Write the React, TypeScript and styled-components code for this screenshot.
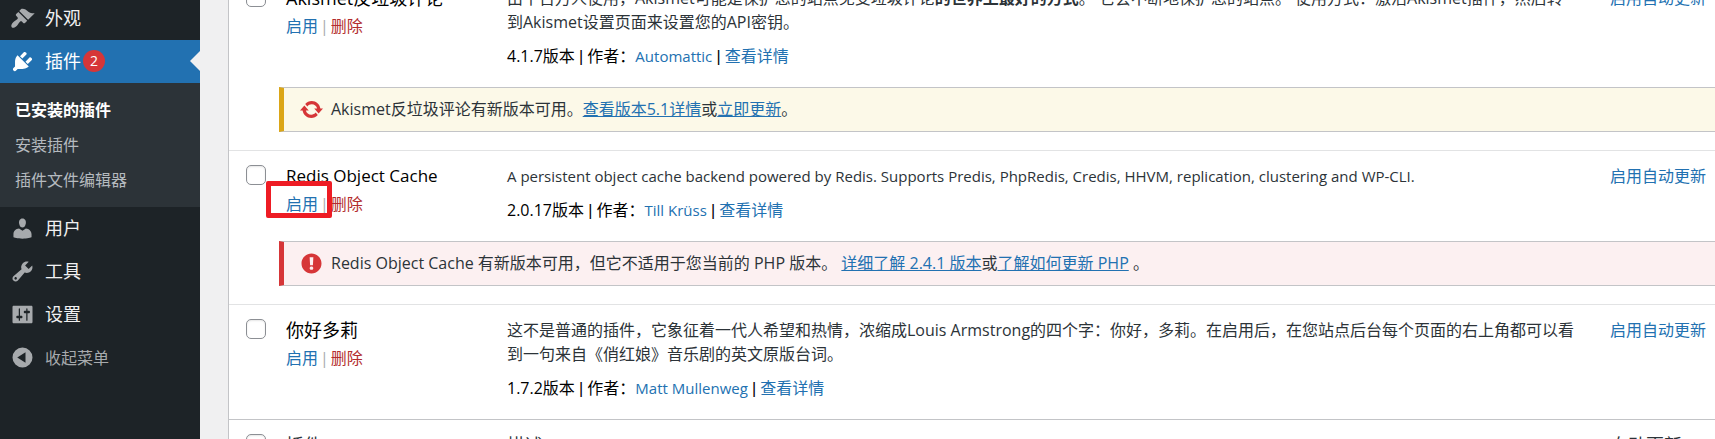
import React from 'react';
import styled, { createGlobalStyle, css } from 'styled-components';

const GlobalStyle = createGlobalStyle`
  *, *::before, *::after { box-sizing: border-box; }
  body {
    margin: 0;
    overflow: hidden;
    background: #f0f0f1;
    color: #2c3338;
    font: 16px/24px "Open Sans", "Noto Sans CJK SC", sans-serif;
  }
`;

const Page = styled.div`
  display: flex;
  height: 100vh;
  overflow: hidden;
`;

const Sidebar = styled.nav`
  flex: 0 0 200px;
  background: #1d2327;
`;

const Menu = styled.ul`
  list-style: none;
  margin: -3px 0 0;
  padding: 0;
`;

const menuEntry = css`
  position: relative;
  display: flex;
  align-items: center;
  gap: 10px;
  width: 100%;
  height: 43px;
  padding: 0 10px 1px;
  border: 0;
  font-family: inherit;
  text-decoration: none;
`;

const MenuLink = styled.a<{ $current?: boolean }>`
  ${menuEntry}
  background: ${(p) => (p.$current ? '#2271b1' : 'transparent')};
  color: ${(p) => (p.$current ? '#fff' : '#f0f0f1')};
  font-size: 18px;

  svg { color: ${(p) => (p.$current ? '#fff' : '#a7aaad')}; }

  &::after {
    content: "";
    display: ${(p) => (p.$current ? 'block' : 'none')};
    position: absolute;
    right: 0;
    border: 10px solid transparent;
    border-right-color: #f0f0f1;
    border-left-width: 0;
  }
`;

const CollapseButton = styled.button`
  ${menuEntry}
  background: none;
  color: #a7aaad;
  font-size: 16px;
`;

const MenuLabel = styled.span`
  display: flex;
  align-items: center;
  gap: 2px;
`;

const CountBadge = styled.span`
  width: 22px;
  height: 22px;
  border-radius: 11px;
  background: #d63638;
  color: #fff;
  font-size: 14px;
  line-height: 22px;
  text-align: center;
`;

const Submenu = styled.ul`
  list-style: none;
  margin: 0;
  padding: 10px 0 9px;
  background: #2c3338;
`;

const SubmenuLink = styled.a<{ $current?: boolean }>`
  display: block;
  padding: 0 15px;
  line-height: 35px;
  text-decoration: none;
  color: ${(p) => (p.$current ? '#fff' : '#b5babf')};
  font-weight: ${(p) => (p.$current ? 700 : 400)};
`;

const Glyph = styled.svg`
  flex: none;
  width: 25px;
  height: 25px;
  fill: currentColor;
`;

const Content = styled.main`
  flex: 1;
  min-width: 0;
  padding-left: 28px;
`;

const PluginTable = styled.table`
  width: 100%;
  margin-top: -28px;
  table-layout: fixed;
  border-collapse: separate;
  border-spacing: 0;
  border-left: 1px solid #c3c4c7;
  background: #fff;
`;

const CheckCol = styled.col` width: 42px; `;
const NameCol = styled.col` width: 223px; `;
const UpdateCol = styled.col` width: 118px; `;

const cell = css`
  padding: 13px 13px 19px;
  text-align: left;
  vertical-align: top;
  font-weight: 400;
`;

const Cell = styled.td`
  ${cell}
  border-top: 1px solid #e2e3e4;
`;

const NameCell = styled(Cell)`
  padding-left: 15px;
`;

const UpdateCell = styled(Cell)`
  padding-right: 0;
  white-space: nowrap;
`;

const CheckCell = styled(Cell)`
  padding: 14px 0 0 17px;
`;

const FootCell = styled.th`
  ${cell}
  border-top: 1px solid #c3c4c7;
  font-size: 18px;

  &:nth-child(2) { padding-left: 15px; }
`;

const FootCheckCell = styled.td`
  padding: 14px 0 0 17px;
  vertical-align: top;
  border-top: 1px solid #c3c4c7;
`;

const Checkbox = styled.input`
  appearance: none;
  display: block;
  width: 20px;
  height: 20px;
  margin: 0;
  border: 1px solid #8c8f94;
  border-radius: 5px;
  background: #fff;
  box-shadow: inset 0 1px 2px rgba(0, 0, 0, 0.1);
`;

const PluginName = styled.label<{ $latin?: boolean }>`
  display: block;
  color: #000;
  font-size: ${(p) => (p.$latin ? 17 : 18)}px;
`;

const Actions = styled.div`
  position: relative;
  display: flex;
  gap: 2px;
  margin-top: 4px;
  color: #a7aaad;
`;

const Link = styled.a<{ $danger?: boolean }>`
  color: ${(p) => (p.$danger ? '#b32d2e' : '#2271b1')};
  text-decoration: none;
`;

const AuthorLink = styled(Link)`
  font-size: 15px;
`;

const Divider = styled.span`
  font-family: "Liberation Sans", sans-serif;
`;

const Highlight = styled.span`
  position: absolute;
  top: -11px;
  left: -20px;
  width: 66px;
  height: 37px;
  border: 5px solid #ee1c24;
  border-radius: 2px;
`;

const Description = styled.p<{ $latin?: boolean }>`
  margin: 0 0 10px;
  font-size: ${(p) => (p.$latin ? 15 : 16)}px;
`;

const Meta = styled.div`
  height: 24px;
  color: #000;
  white-space: nowrap;
`;

const NoticeCell = styled.td`
  padding: 0 0 18px 50px;
`;

const tones = {
  warning: { edge: '#dba617', fill: '#fcf9e8' },
  error: { edge: '#d63638', fill: '#fcf0f1' },
};

const Notice = styled.div<{ $tone: keyof typeof tones }>`
  display: flex;
  align-items: center;
  gap: 7px;
  height: 45px;
  padding: 0 0 1px 15px;
  border: solid #c3c4c7;
  border-width: 1px 0;
  border-left: 5px solid ${(p) => tones[p.$tone].edge};
  background: ${(p) => tones[p.$tone].fill};

  svg { color: #d63638; }
  a { text-decoration: underline; }
`;

const icons = {
  appearance:
    'M14.48 11.06L7.41 3.99l1.5-1.5c.5-.56 2.3-.47 3.51.32 1.21.8 1.43 1.28 2.91 2.1 1.18.64 2.45 1.26 4.45.85zm-.71.71L6.7 4.7 4.93 6.47c-.39.39-.39 1.02 0 1.41l1.06 1.06c.39.39.39 1.03 0 1.42-.6.6-1.43 1.11-2.21 1.69-.35.26-.7.53-1.01.84C1.43 14.23.4 16.08 1.4 17.07c.99 1 2.84-.03 4.18-1.36.31-.31.58-.66.85-1.02.57-.78 1.08-1.61 1.69-2.21.39-.39 1.02-.39 1.41 0l1.06 1.06c.39.39 1.02.39 1.41 0z',
  plugins:
    'M13.11 4.36L9.87 7.6 8 5.73l3.24-3.24c.35-.34 1.05-.2 1.56.32.52.51.66 1.21.31 1.55zm-8 1.77l.91-1.12 9.01 9.01-1.19.84c-.71.71-2.63 1.16-3.82 1.16H6.14L4.9 17.26c-.59.59-1.54.59-2.12 0-.59-.58-.59-1.53 0-2.12l1.24-1.24v-3.88c0-1.13.4-3.19 1.09-3.89zm7.26 3.97l3.24-3.24c.34-.35 1.04-.21 1.55.31.52.51.66 1.21.31 1.55l-3.24 3.25z',
  users:
    'M10 9.25c-2.27 0-2.73-3.44-2.73-3.44C7 4.02 7.82 2 9.97 2c2.16 0 2.98 2.02 2.71 3.81 0 0-.41 3.44-2.68 3.44zm0 2.57L12.72 10c2.39 0 4.52 2.33 4.52 4.53v2.49s-3.65 1.13-7.24 1.13c-3.65 0-7.24-1.13-7.24-1.13v-2.49c0-2.25 1.94-4.48 4.47-4.48z',
  tools:
    'M16.68 9.77c-1.34 1.34-3.3 1.67-4.95.99l-5.41 6.52c-.99.99-2.59.99-3.58 0s-.99-2.59 0-3.57l6.52-5.42c-.68-1.65-.35-3.61.99-4.95 1.28-1.28 3.12-1.62 4.72-1.06l-2.89 2.89 2.82 2.82 2.86-2.87c.53 1.58.18 3.39-1.08 4.65zM3.81 16.21c.4.39 1.04.39 1.43 0 .4-.4.4-1.04 0-1.43-.39-.4-1.03-.4-1.43 0-.39.39-.39 1.03 0 1.43z',
  settings:
    'M18 16V4c0-.55-.45-1-1-1H3c-.55 0-1 .45-1 1v12c0 .55.45 1 1 1h14c.55 0 1-.45 1-1zM8 11h1c.55 0 1 .45 1 1s-.45 1-1 1H8v1.5c0 .28-.22.5-.5.5s-.5-.22-.5-.5V13H6c-.55 0-1-.45-1-1s.45-1 1-1h1V5.5c0-.28.22-.5.5-.5s.5.22.5.5V11zm5-2h-1c-.55 0-1-.45-1-1s.45-1 1-1h1V5.5c0-.28.22-.5.5-.5s.5.22.5.5V7h1c.55 0 1 .45 1 1s-.45 1-1 1h-1v5.5c0 .28-.22.5-.5.5s-.5-.22-.5-.5V9z',
  collapse: 'M10 2a8 8 0 1 1 0 16 8 8 0 0 1 0-16zM12.4 5.8L5.8 10l6.6 4.2z',
  update:
    'M10.2 3.28c3.53 0 6.43 2.61 6.92 6h2.08l-3.5 4-3.5-4h2.32c-.45-1.97-2.21-3.45-4.32-3.45-1.45 0-2.73.71-3.54 1.78L4.95 5.66C6.23 4.2 8.11 3.28 10.2 3.28zm-.4 13.44c-3.52 0-6.43-2.61-6.92-6H.8l3.5-4c1.17 1.33 2.33 2.67 3.5 4H5.48c.45 1.97 2.21 3.45 4.32 3.45 1.45 0 2.73-.71 3.54-1.78l1.71 1.95c-1.28 1.46-3.15 2.38-5.25 2.38z',
  warning:
    'M10 2c4.42 0 8 3.58 8 8s-3.58 8-8 8-8-3.58-8-8 3.58-8 8-8zm1.13 9.38l.35-6.46H8.52l.35 6.46h2.26zm-.09 3.36c.24-.23.37-.55.37-.96 0-.42-.12-.74-.36-.97s-.59-.35-1.06-.35-.82.12-1.07.35-.37.55-.37.97c0 .41.13.73.38.96.26.23.61.34 1.06.34s.8-.11 1.05-.34z',
};

function Icon({ name }: { name: keyof typeof icons }) {
  return (
    <Glyph viewBox="0 0 20 20" aria-hidden="true">
      <path d={icons[name]} fillRule="evenodd" />
    </Glyph>
  );
}

interface PluginRowProps {
  id: string;
  name: string;
  version: string;
  author: string;
  latin?: boolean;
  highlighted?: boolean;
  children: React.ReactNode;
}

function PluginRow({ id, name, version, author, latin, highlighted, children }: PluginRowProps) {
  return (
    <tr>
      <CheckCell>
        <Checkbox type="checkbox" id={id} />
      </CheckCell>
      <NameCell>
        <PluginName htmlFor={id} $latin={latin}>{name}</PluginName>
        <Actions>
          <Link href="#">启用</Link>|<Link href="#" $danger>删除</Link>
          {highlighted && <Highlight />}
        </Actions>
      </NameCell>
      <Cell>
        <Description $latin={latin}>{children}</Description>
        <Meta>
          {version}版本 <Divider>|</Divider> 作者：<AuthorLink href="#">{author}</AuthorLink>{' '}
          <Divider>|</Divider> <Link href="#">查看详情</Link>
        </Meta>
      </Cell>
      <UpdateCell>
        <Link href="#">启用自动更新</Link>
      </UpdateCell>
    </tr>
  );
}

export default function App() {
  return (
    <Page>
      <GlobalStyle />
      <Sidebar>
        <Menu>
          <li><MenuLink href="#"><Icon name="appearance" />外观</MenuLink></li>
          <li>
            <MenuLink href="#" $current>
              <Icon name="plugins" />
              <MenuLabel>插件<CountBadge>2</CountBadge></MenuLabel>
            </MenuLink>
            <Submenu>
              <li><SubmenuLink href="#" $current>已安装的插件</SubmenuLink></li>
              <li><SubmenuLink href="#">安装插件</SubmenuLink></li>
              <li><SubmenuLink href="#">插件文件编辑器</SubmenuLink></li>
            </Submenu>
          </li>
          <li><MenuLink href="#"><Icon name="users" />用户</MenuLink></li>
          <li><MenuLink href="#"><Icon name="tools" />工具</MenuLink></li>
          <li><MenuLink href="#"><Icon name="settings" />设置</MenuLink></li>
          <li><CollapseButton type="button"><Icon name="collapse" />收起菜单</CollapseButton></li>
        </Menu>
      </Sidebar>
      <Content>
        <PluginTable>
          <colgroup>
            <CheckCol />
            <NameCol />
            <col />
            <UpdateCol />
          </colgroup>
          <tbody>
            <PluginRow id="akismet" name="Akismet反垃圾评论" version="4.1.7" author="Automattic">
              由千百万人使用，Akismet可能是保护您的站点免受垃圾评论<strong>的世界上最好的方式</strong>。 它会不断地保护您的站点。 使用方式：激活Akismet插件，然后转<br />
              到Akismet设置页面来设置您的API密钥。
            </PluginRow>
            <tr>
              <NoticeCell colSpan={4}>
                <Notice $tone="warning">
                  <Icon name="update" />
                  <span>
                    Akismet反垃圾评论有新版本可用。<Link href="#">查看版本5.1详情</Link>或<Link href="#">立即更新</Link>。
                  </span>
                </Notice>
              </NoticeCell>
            </tr>
            <PluginRow id="redis" name="Redis Object Cache" version="2.0.17" author="Till Krüss" latin highlighted>
              A persistent object cache backend powered by Redis. Supports Predis, PhpRedis, Credis, HHVM, replication, clustering and WP-CLI.
            </PluginRow>
            <tr>
              <NoticeCell colSpan={4}>
                <Notice $tone="error">
                  <Icon name="warning" />
                  <span>
                    Redis Object Cache 有新版本可用，但它不适用于您当前的 PHP 版本。 <Link href="#">详细了解 2.4.1 版本</Link>或<Link href="#">了解如何更新 PHP</Link> 。
                  </span>
                </Notice>
              </NoticeCell>
            </tr>
            <PluginRow id="dolly" name="你好多莉" version="1.7.2" author="Matt Mullenweg">
              这不是普通的插件，它象征着一代人希望和热情，浓缩成Louis Armstrong的四个字：你好，多莉。在启用后，在您站点后台每个页面的右上角都可以看到一句来自《俏红娘》音乐剧的英文原版台词。
            </PluginRow>
          </tbody>
          <tfoot>
            <tr>
              <FootCheckCell>
                <Checkbox type="checkbox" aria-label="全选" />
              </FootCheckCell>
              <FootCell scope="col">插件</FootCell>
              <FootCell scope="col">描述</FootCell>
              <FootCell scope="col">自动更新</FootCell>
            </tr>
          </tfoot>
        </PluginTable>
      </Content>
    </Page>
  );
}
